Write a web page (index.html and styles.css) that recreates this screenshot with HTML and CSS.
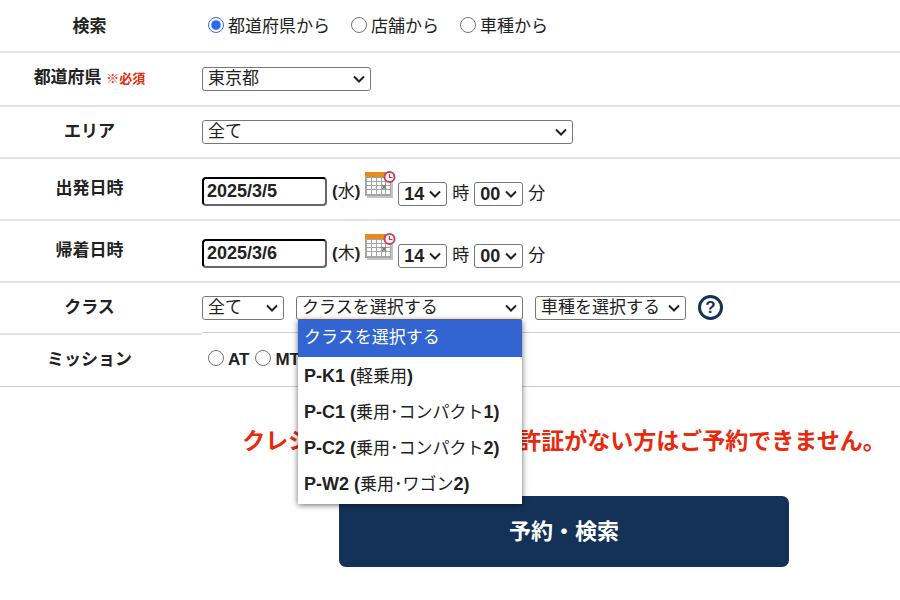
FILE: index.html
```
<!DOCTYPE html>
<html lang="ja">
  <head>
    <meta charset="utf-8" />
    <meta name="viewport" content="width=device-width, initial-scale=1" />
    <title>予約・検索</title>
    <link rel="stylesheet" href="styles.css">
  </head>
  <body>
    <svg class="defs" width="0" height="0" aria-hidden="true">
      <symbol id="calendar" viewBox="0 0 31 27">
        <rect x="2" y="2" width="26" height="25" fill="#c4c4c4" />
        <rect x="0" y="1" width="26" height="24" fill="#a5a5a5" />
        <path d="M0 1h26v5H0z" fill="#e88a1c" />
        <path d="M2 7h4v3H2zM7 7h4v3H7zM12 7h4v3h-4zM17 7h3v3h-3zM21 7h4v3h-4zM2 11h4v3H2zM7 11h4v3H7zM12 11h4v3h-4zM17 11h3v3h-3zM21 11h4v3h-4zM2 15h4v3H2zM7 15h4v3H7zM12 15h4v3h-4zM17 15h3v3h-3zM21 15h4v3h-4zM2 19h4v4H2zM7 19h4v4H7zM12 19h4v4h-4zM17 19h3v4h-3zM21 19h4v4h-4z" fill="#fff" />
        <path d="M17 14l4 4m0-4l-4 4" stroke="#777" stroke-width="1.5" />
        <circle cx="24.500" cy="6" r="5" fill="#fff" stroke="#c9405a" stroke-width="2" />
        <path d="M24.500 3v3.500h3" fill="none" stroke="#b83a50" stroke-width="1.200" />
      </symbol>
    </svg>

    <form class="search">
      <div class="row row-search">
        <div class="head">検索</div>
        <div class="field">
          <label class="radio radio-wide"><input type="radio" name="from" checked />都道府県から</label>
          <label class="radio radio-wide"><input type="radio" name="from" />店舗から</label>
          <label class="radio radio-wide"><input type="radio" name="from" />車種から</label>
        </div>
      </div>

      <div class="row row-pref">
        <label class="head" for="pref">都道府県 <span class="required">※必須</span></label>
        <div class="field">
          <select id="pref" class="select-pref"><option>東京都</option></select>
        </div>
      </div>

      <div class="row">
        <label class="head" for="area">エリア</label>
        <div class="field">
          <select id="area" class="select-area"><option>全て</option></select>
        </div>
      </div>

      <div class="row row-date">
        <label class="head" for="start">出発日時</label>
        <div class="field">
          <input id="start" class="date" type="text" value="2025/3/5" />
          <span class="day"><b>(</b>水<b>)</b></span>
          <svg class="calendar"><use href="#calendar" /></svg>
          <select id="start-hour" class="select-time"><option>14</option></select>
          <label class="unit" for="start-hour">時</label>
          <select id="start-min" class="select-time"><option>00</option></select>
          <label class="unit" for="start-min">分</label>
        </div>
      </div>

      <div class="row row-date">
        <label class="head" for="end">帰着日時</label>
        <div class="field">
          <input id="end" class="date" type="text" value="2025/3/6" />
          <span class="day"><b>(</b>木<b>)</b></span>
          <svg class="calendar"><use href="#calendar" /></svg>
          <select id="end-hour" class="select-time"><option>14</option></select>
          <label class="unit" for="end-hour">時</label>
          <select id="end-min" class="select-time"><option>00</option></select>
          <label class="unit" for="end-min">分</label>
        </div>
      </div>

      <div class="row row-class">
        <label class="head" for="class">クラス</label>
        <div class="field">
          <select class="select-type" aria-label="全て"><option>全て</option></select>
          <div class="dropdown">
            <select id="class" class="select-class"><option>クラスを選択する</option></select>
            <ul class="menu" role="listbox">
              <li class="selected" role="option" aria-selected="true">クラスを選択する</li>
              <li role="option"><b>P-K1 (</b>軽乗用<b>)</b></li>
              <li role="option"><b>P-C1 (</b>乗用･コンパクト<b>1)</b></li>
              <li role="option"><b>P-C2 (</b>乗用･コンパクト<b>2)</b></li>
              <li role="option"><b>P-W2 (</b>乗用･ワゴン<b>2)</b></li>
            </ul>
          </div>
          <select class="select-model" aria-label="車種を選択する"><option>車種を選択する</option></select>
          <button type="button" class="help">?</button>
        </div>
      </div>

      <div class="row row-mission">
        <div class="head">ミッション</div>
        <div class="field">
          <label class="radio"><input type="radio" name="mission" /><b>AT</b></label>
          <label class="radio"><input type="radio" name="mission" /><b>MT</b></label>
        </div>
      </div>

      <div class="submit">
        <p class="warning">クレジットカードと運転免許証がない方はご予約できません。</p>
        <button type="submit" class="btn">予約・検索</button>
      </div>
    </form>
  </body>
</html>
```
FILE: styles.css
```
* {
  box-sizing: border-box;
}

body {
  margin: 0;
  background: #fff;
  color: #222;
  font-family: "Liberation Sans", "Noto Sans CJK JP", sans-serif;
  font-size: 17px;
  line-height: 24px;
}

.menu b {
  font-size: 18px;
}

.defs {
  position: absolute;
}

/* form rows */
.row {
  display: grid;
  grid-template-columns: 202px 1fr;
}

.head {
  padding: 13px 23px 13px 0;
  border-bottom: 2px solid #e2e2e2;
  font-weight: 700;
  text-align: center;
  white-space: nowrap;
}

.field {
  display: flex;
  align-items: center;
  padding: 13px 0;
  border-bottom: 2px solid #e2e2e2;
  white-space: nowrap;
}

.row-search .head,
.row-search .field {
  padding-top: 15px;
  padding-bottom: 12px;
}

.row-pref .head,
.row-pref .field {
  padding-bottom: 14px;
}

.row-date .head {
  padding-top: 18px;
  padding-bottom: 18px;
}

.row-date .field {
  align-items: flex-end;
  padding: 12px 0 13px;
}

.row-class .field {
  gap: 12px;
  margin-bottom: 2px;
  padding-bottom: 12px;
  border-bottom: 1px solid #ccc;
}

.row-mission .head,
.row-mission .field {
  padding-bottom: 14px;
  border-bottom: 1px solid #ccc;
}

.required {
  color: #e8290b;
  font-size: 13px;
  font-weight: 700;
}

/* controls */
.radio {
  display: flex;
  align-items: center;
}

.radio-wide {
  margin-right: 15px;
}

.radio input {
  width: 16px;
  height: 16px;
  margin: 0 4px 5px 6px;
  accent-color: #2a6af5;
}

select {
  height: 24px;
  padding: 0 20px 0 5px;
  border: 1px solid #767676;
  border-radius: 3px;
  appearance: none;
  background: #fff url("data:image/svg+xml,%3Csvg xmlns='http://www.w3.org/2000/svg' width='12' height='8'%3E%3Cpath d='M1 1.500l5 5 5-5' fill='none' stroke='%23222' stroke-width='2'/%3E%3C/svg%3E") no-repeat right 5px center;
  color: #222;
  font: inherit;
  line-height: 22px;
}

.select-pref {
  width: 169px;
}

.select-area {
  width: 371px;
}

.select-type {
  width: 82px;
}

.select-class {
  display: block;
  width: 227px;
}

.select-model {
  width: 151px;
}

.select-time {
  width: 49px;
  font-size: 18px;
  font-weight: 700;
}

.date {
  width: 125px;
  height: 29px;
  padding: 0 3px;
  border: 2px solid #000;
  border-right-color: #666;
  border-bottom-color: #666;
  border-radius: 4px;
  color: #222;
  font: inherit;
  font-size: 18px;
  font-weight: 700;
}

.day {
  margin: 0 5px;
  line-height: 29px;
}

.calendar {
  align-self: flex-start;
  width: 31px;
  height: 27px;
  margin-right: 2px;
  margin-bottom: 8px;
}

.unit {
  margin: 0 5px;
}

.help {
  width: 25px;
  height: 25px;
  margin: -1px 0 0;
  padding: 0;
  border: 3px solid #14325a;
  border-radius: 50%;
  background: #fff;
  color: #14325a;
  font: 700 17px/19px "Liberation Sans", sans-serif;
}

/* opened class list */
.dropdown {
  position: relative;
}

.menu {
  position: absolute;
  z-index: 1;
  top: 100%;
  left: 2px;
  width: 224px;
  margin: 0;
  padding: 0 0 2px;
  background: #fff;
  box-shadow: 0 1px 6px rgba(0, 0, 0, 0.6);
  line-height: 36px;
  list-style: none;
}

.menu li {
  height: 36px;
  padding-left: 6px;
}

.menu .selected {
  height: 37px;
  margin-bottom: 1px;
  background: #3264d2;
  color: #fff;
}

.submit {
  display: flex;
  flex-direction: column;
  align-items: center;
  padding: 37px 0 33px 228px;
}

.warning {
  margin: 0 0 38px;
  color: #e8290b;
  font-size: 23px;
  font-weight: 700;
  line-height: 34px;
  white-space: nowrap;
}

.btn {
  width: 67%;
  padding: 18px 0;
  border: 0;
  border-radius: 7px;
  background: #143258;
  color: #fff;
  font: inherit;
  font-size: 22px;
  font-weight: 700;
  line-height: 35px;
}
```
